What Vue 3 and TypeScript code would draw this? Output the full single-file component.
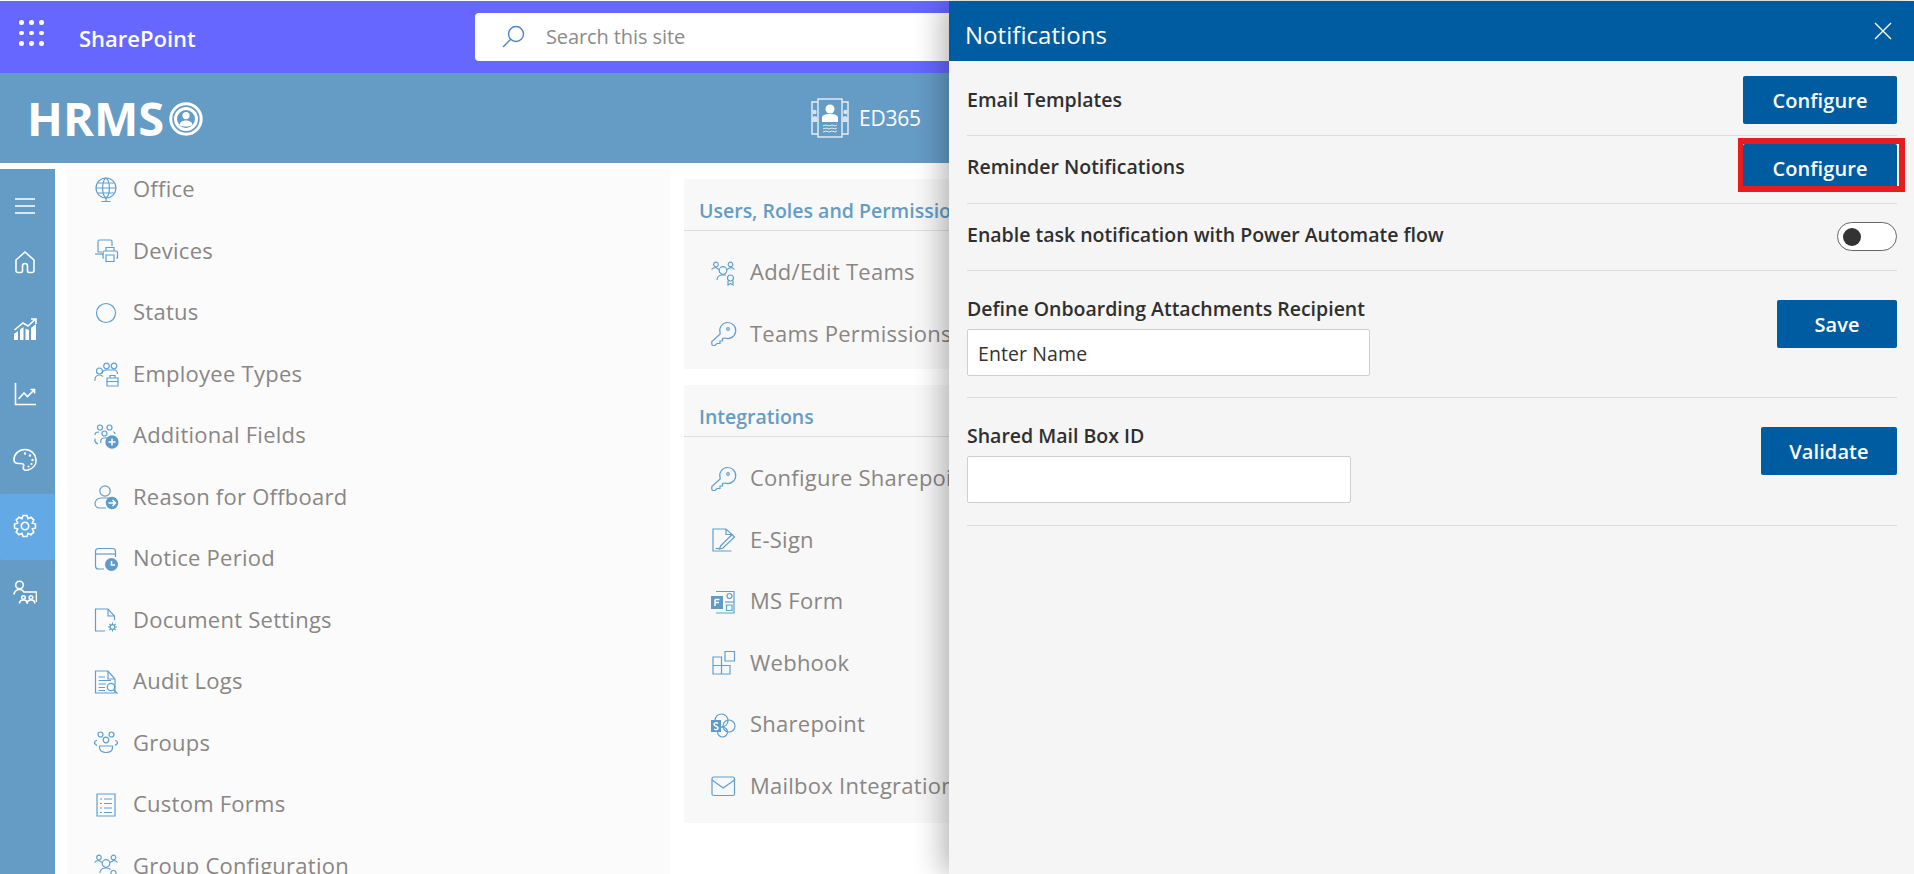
<script setup lang="ts">
interface Icon { s?: string[]; f?: string[]; w?: string[] }
interface Item { label: string; icon: Icon }

const c = (x: number, y: number, r: number): string =>
  `M${x - r} ${y}a${r} ${r} 0 1 0 ${r * 2} 0a${r} ${r} 0 1 0 ${-r * 2} 0`

const key: Icon = {
  s: ['M9 10.5A8 8 0 1 1 14 16L11.5 16.5V19H9V21.5H6L4 23.5H2A1.5 1.5 0 0 1 .8 22V19.5L9.2 12Z', c(17, 7, 1.3)],
}

const left: Item[] = [
  { label: 'Office', icon: { s: [c(12, 10, 10), 'M12 0C7.5 3 7.5 17 12 20C16.5 17 16.5 3 12 0', 'M2 10H22M3.5 5H20.5M3.5 15H20.5M12 20V23M7.5 23.5H16.5'] } },
  { label: 'Devices', icon: { s: ['M8 13H4V2.5C4 1.5 4.5 1 5.5 1H16.5C17.5 1 18 1.5 18 2.5V7', 'M1 15H10', 'M10 19H9V13.5C9 12.5 9.5 12 10.5 12H22C23 12 23.5 12.5 23.5 13.5V19H22', 'M12 12V8.5H20V12', 'M12 16H20V22.5H12Z'] } },
  { label: 'Status', icon: { s: [c(12, 12, 9.5)] } },
  { label: 'Employee Types', icon: { s: [c(5.5, 9, 3), c(12.5, 4, 2.8), c(20, 4, 2.8), 'M.8 19C.8 15 3 13 5.5 13C7 13 8 13.5 9 14.5', 'M8 11.5C8.5 9 10 8 12.5 8H20C22 8 23.5 10 23.5 12', 'M13 16H24V24H13ZM16 16V13.5H21V16M13 19.5H24'] } },
  { label: 'Additional Fields', icon: { s: [c(6, 3.5, 2.5), c(15.5, 3.5, 2.5), c(10.5, 9.5, 2.5), 'M1 11C1 8.5 2.5 8 5 8M4 20C1.5 19 .5 17 1 14.5M13 14H10C7.5 14 6 16 7 19', 'M19 8C20 8 21 9 21 10'], f: [c(18, 18, 6.7)], w: ['M18 14.5V21.5M14.5 18H21.5'] } },
  { label: 'Reason for Offboard', icon: { s: [c(11, 6, 5.2), 'M16 13H7C3 13 1 16 1 18.5C1 21 3 23 6 23H12'], f: [c(18, 18, 6.2)], w: ['M14.5 18H21M18.5 15L21.5 18L18.5 21'] } },
  { label: 'Notice Period', icon: { s: ['M10 22H4.5C2.5 22 1.5 21 1.5 19V4.5C1.5 2.5 2.5 1.5 4.5 1.5H18.5C20.5 1.5 21.5 2.5 21.5 4.5V10', 'M1.5 7H21.5'], f: [c(17.5, 17.5, 6.5)], w: ['M17.5 14V18H21'] } },
  { label: 'Document Settings', icon: { s: ['M11 23H1.5V1H14L20.5 8V12', 'M14 1V8H20.5', c(18.5, 19, 2.3), 'M18.5 14.5V16.5M18.5 21.5V23.5M14 19H16M21 19H23M15.3 15.8L16.8 17.3M20.2 20.7L21.7 22.2M15.3 22.2L16.8 20.7M20.2 17.3L21.7 15.8'] } },
  { label: 'Audit Logs', icon: { s: ['M21 9V23H1.5V1H14L21 9', 'M14 1V9H21', 'M4.5 7H11M4.5 10.5H17M4.5 14H12M4.5 17.5H11M4.5 20.5H11', c(17, 17, 3.7), 'M19.5 19.8L23.5 23.5'] } },
  { label: 'Groups', icon: { s: [c(6.5, 3.5, 2.5), c(17.5, 3.5, 2.5), c(12, 9, 2.8), 'M3 9.5C1 9.5 .5 11 .5 12.5L3 14.5M21 9.5C23 9.5 23.5 11 23.5 12.5L21 14.5', 'M5.5 15H18.5V16.5C18.5 20 15.5 21.5 12 21.5C8.5 21.5 5.5 20 5.5 16.5Z'] } },
  { label: 'Custom Forms', icon: { s: ['M3 1H21V23H3Z', 'M6 6H8M10 6H18M6 10.5H8M10 10.5H18M6 15H8M10 15H18M6 19.5H8M10 19.5H18'] } },
  { label: 'Group Configuration', icon: { s: [c(5, 3.5, 2.3), c(19.5, 3.5, 2.3), c(12, 9.5, 3.8), c(19.5, 19, 2.5), 'M.5 8.5C1.5 7 3 6.5 5 6.5L8 8.5M23.5 8.5C22.5 7 21 6.5 19.5 6.5L16 8.5M6 19C6 16 8 14 12 14C14 14 15.5 14.5 16.5 15.5'] } },
]

const users: Item[] = [
  { label: 'Add/Edit Teams', icon: { s: [c(5, 3.5, 2.3), c(19.5, 3.5, 2.3), c(12, 9.5, 3.8), c(19.5, 17, 3), 'M.5 8.5C1.5 7 3 6.5 5 6.5L8 8.5M23.5 8.5C22.5 7 21 6.5 19.5 6.5L16 8.5M6 19C6 16 8 14 12 14H15', 'M17 20V24L19.5 22.5L22 24V20'] } },
  { label: 'Teams Permissions', icon: key },
]

const integrations: Item[] = [
  { label: 'Configure Sharepoint', icon: key },
  { label: 'E-Sign', icon: { s: ['M20.5 23H2V1H15L21 6.5L19 9', 'M15 1V6.5H20', 'M9.5 18L21 6.5L23.5 9L12 20L8.5 21Z', 'M4.5 20.5H8'] } },
  { label: 'MS Form', icon: { s: ['M5 1.5H23V23H5', c(18.5, 6, 2.5), 'M15.5 15H21V20.5H15.5Z', 'M14 12H23'], f: ['M0 6H12V19H0Z'], w: ['M4 9.5H8.5M4 9.5V16M4 12.5H8'] } },
  { label: 'Webhook', icon: { s: ['M2 6H10.5V14.5H19V23H2Z', 'M2 14.5H10.5V23', 'M14 .5H23.5V10H14Z'] } },
  { label: 'Sharepoint', icon: { s: [c(10.5, 7.5, 6.5), c(18, 13, 6), c(11.5, 19, 5)], f: ['M0 7H10V19H0Z'], w: ['M7 10.5C5.5 9.5 3 9.5 3 11.5C3 13.5 7 13 7 15C7 17 4.5 17 3 16'] } },
  { label: 'Mailbox Integration', icon: { s: ['M1 5C1 3.5 2 3 3 3H21.5C23 3 23.5 3.5 23.5 5V20C23.5 21 23 21.5 21.5 21.5H3C2 21.5 1 21 1 20Z', 'M1 6L12.2 14L23.5 6'] } },
]

const rail: Icon[] = [
  { s: ['M2 5H22M2 12H22M2 19H22'] },
  { s: ['M3 10L12 2L21 10V20.5C21 22 20 22.5 19 22.5H16C15 22.5 14.5 22 14.5 21V16C14.5 14.5 13.5 13.5 12 13.5C10.5 13.5 9.5 14.5 9.5 16V21C9.5 22 9 22.5 8 22.5H5C4 22.5 3 22 3 20.5Z'] },
  { s: ['M1.5 13L10 6L15 9L22.5 2M18 2H23V7'], f: ['M1 17L5 14V23H1ZM7 12.5L10.5 10V23H7ZM12.5 11.5L16 13V23H12.5ZM18 11L23 7V23H18Z'] },
  { s: ['M2.5 1V22.5H23', 'M5.5 17L11 11L14.5 14.5L21.5 7.5M17.5 7.5H21.5V11.5'] },
  { s: ['M12 1.5C6 1.5 1 6 1 11.5C1 14 3 15.5 5.5 15.5C7.5 15.5 9.5 15 10.5 16.5C11.5 18 9.5 19 10.5 21C11.5 22.5 13 22.5 15 22C20 20.5 23.5 16.5 23 11.5C22.5 6 18 1.5 12 1.5Z'], f: [c(12, 5.5, 1.2), c(17, 7.5, 1.2), c(19.5, 12, 1.2), c(18.5, 16, 1.1), c(15.5, 18.5, 1.1)] },
  { s: [c(12, 12, 3.7), 'M10 1.5H14L15 4.7L18 3.3L20.8 6L19.3 9L22.5 10V14L19.3 15L20.8 18L18 20.7L15 19.3L14 22.5H10L9 19.3L6 20.7L3.2 18L4.7 15L1.5 14V10L4.7 9L3.2 6L6 3.3L9 4.7Z'] },
  { s: [c(6.5, 5, 3.8), 'M.8 14.5C1.5 11 4 9.5 7 9.5C8.5 9.5 10 10.5 11 12H23.5V22', c(10.5, 17.5, 1.8), c(18, 17.5, 1.8), 'M6.5 23.5C6.5 21 8.5 20 10.5 20C12.5 20 14.2 21 14.2 23.5', 'M14.2 23.5C14.2 21 16 20 18 20C20 20 21.8 21 21.8 23.5'] },
]
</script>

<template>
  <div class="page">
    <header class="suite">
      <div class="waffle"><i v-for="n in 9" :key="n"></i></div>
      <span class="brand">SharePoint</span>
      <div class="search">
        <svg class="search-icon" viewBox="0 0 24 24"><path d="M2 22L10 14" /><circle cx="15" cy="9" r="7.5" /></svg>
        <span>Search this site</span>
      </div>
    </header>

    <div class="banner">
      <div class="logo">
        <span>HRMS</span>
        <svg viewBox="0 0 34 34" class="logo-mark">
          <circle cx="17" cy="17" r="15.2" class="ring" />
          <circle cx="17" cy="17" r="10.5" class="ring" />
          <circle cx="17" cy="13.6" r="3.6" class="dot" />
          <path class="dot" d="M10.5 23C11 19.5 14 18.5 17 18.5C20 18.5 23 19.5 23.5 23C20 25 14 25 10.5 23Z" />
        </svg>
      </div>
      <div class="ed">
        <svg viewBox="0 0 38 40" class="ed-mark">
          <path class="ed-line" d="M7 4H1V36H7M31 4H37V36H31" />
          <rect class="ed-line" x="7" y="1" width="24" height="38" />
          <circle cx="19" cy="11" r="4.5" class="ed-fill" />
          <path class="ed-fill" d="M11 24V20C11 17 14 16 19 16C24 16 27 17 27 20V24Z" />
          <path class="ed-thin" d="M12 28L15 27L18 28L21 27L24 28L26 27M12 31L15 30L18 31L21 30L24 31L26 30M12 34L15 33L18 34L21 33L24 34L26 33" />
          <circle cx="3.5" cy="14" r="2.2" class="ed-dim" /><circle cx="34.5" cy="14" r="2.2" class="ed-dim" />
          <path class="ed-dim" d="M1 24V20C2 18 5 18 6.5 19V24ZM31.5 24V19C33 18 36 18 37 20V24Z" />
        </svg>
        <span>ED365</span>
      </div>
    </div>

    <div class="body">
      <nav class="rail">
        <div v-for="(ic, i) in rail" :key="i" class="rail-item" :class="{ first: i === 0, active: i === 5 }">
          <svg viewBox="0 0 24 24" class="rail-icon">
            <path v-for="d in ic.s" :key="d" :d="d" class="rail-s" />
            <path v-for="d in ic.f" :key="d" :d="d" class="rail-f" />
          </svg>
        </div>
      </nav>

      <section class="panel">
        <ul class="list list-left">
          <li v-for="it in left" :key="it.label" class="row">
            <svg viewBox="0 0 24 24" class="ico">
              <path v-for="d in it.icon.s" :key="d" :d="d" class="s" />
              <path v-for="d in it.icon.f" :key="d" :d="d" class="f" />
              <path v-for="d in it.icon.w" :key="d" :d="d" class="w" />
            </svg>
            <span>{{ it.label }}</span>
          </li>
        </ul>
      </section>

      <section class="cards">
        <div class="card card-users">
          <h3>Users, Roles and Permissions</h3>
          <ul class="list">
            <li v-for="it in users" :key="it.label" class="row">
              <svg viewBox="0 0 24 24" class="ico">
                <path v-for="d in it.icon.s" :key="d" :d="d" class="s" />
              </svg>
              <span>{{ it.label }}</span>
            </li>
          </ul>
        </div>
        <div class="card card-int">
          <h3>Integrations</h3>
          <ul class="list">
            <li v-for="it in integrations" :key="it.label" class="row">
              <svg viewBox="0 0 24 24" class="ico">
                <path v-for="d in it.icon.s" :key="d" :d="d" class="s" />
                <path v-for="d in it.icon.f" :key="d" :d="d" class="f" />
                <path v-for="d in it.icon.w" :key="d" :d="d" class="w" />
              </svg>
              <span>{{ it.label }}</span>
            </li>
          </ul>
        </div>
      </section>
    </div>

    <aside class="drawer">
      <div class="drawer-head">
        <span class="title">Notifications</span>
        <svg viewBox="0 0 18 18" class="close"><path d="M1 1L17 17M17 1L1 17" /></svg>
      </div>
      <div class="drawer-body">
        <div class="line l1">
          <b>Email Templates</b>
          <button class="btn wide">Configure</button>
        </div>
        <div class="line l2">
          <b class="up1">Reminder Notifications</b>
          <div class="marked">
            <button class="btn wide short">Configure</button>
            <span class="marker"></span>
          </div>
        </div>
        <div class="line l3">
          <b class="up">Enable task notification with Power Automate flow</b>
          <span class="toggle"><i></i></span>
        </div>
        <div class="line l4">
          <div class="field">
            <b>Define Onboarding Attachments Recipient</b>
            <div class="input i1">Enter Name</div>
          </div>
          <button class="btn save">Save</button>
        </div>
        <div class="line l5">
          <div class="field">
            <b>Shared Mail Box ID</b>
            <div class="input i2"></div>
          </div>
          <button class="btn validate">Validate</button>
        </div>
      </div>
    </aside>
  </div>
</template>

<style scoped>
.page {
  position: relative;
  width: 1914px;
  height: 874px;
  overflow: hidden;
  background: #fff;
  padding-top: 1px;
  box-sizing: border-box;
  font-family: "Open Sans", "Noto Sans", sans-serif;
}
.suite {
  height: 72px;
  background: #6667ff;
  display: flex;
  align-items: center;
  box-sizing: border-box;
}
.waffle {
  width: 24px;
  display: grid;
  grid-template-columns: repeat(3, 4px);
  gap: 6px;
  margin-left: 19px;
  margin-top: -8px;
}
.waffle i {
  width: 4.5px;
  height: 4.5px;
  border-radius: 50%;
  background: #fff;
}
.brand {
  width: 118px;
  color: #fff;
  font-size: 22px;
  font-weight: 600;
  margin-left: 36px;
  margin-top: 1px;
  white-space: nowrap;
}
.search {
  width: 560px;
  height: 48px;
  margin: -1px 0 0 278px;
  background: #fff;
  border-radius: 4px;
  display: flex;
  align-items: center;
  color: #8b8b8b;
  font-size: 20px;
  letter-spacing: -0.1px;
  padding-left: 26px;
  box-sizing: border-box;
}
.search-icon {
  width: 24px;
  height: 24px;
  fill: none;
  stroke: #4d86c6;
  stroke-width: 1.4;
  margin-right: 21px;
}
.banner {
  height: 90px;
  background: #659cc6;
  display: flex;
  align-items: center;
  color: #fff;
}
.logo {
  display: flex;
  align-items: center;
  margin-left: 27px;
  width: 784px;
  font-size: 47px;
  font-weight: 700;
  line-height: 1;
}
.logo-mark {
  width: 34px;
  height: 34px;
  margin-left: 5px;
  margin-top: 2px;
}
.ring {
  fill: none;
  stroke: #fff;
  stroke-width: 3;
}
.dot {
  fill: #fff;
}
.ed {
  display: flex;
  align-items: center;
  gap: 10px;
  font-size: 21px;
  letter-spacing: -0.2px;
}
.ed-mark {
  width: 38px;
  height: 40px;
}
.ed-line {
  fill: none;
  stroke: #e6f0f7;
  stroke-width: 1.4;
}
.ed-fill {
  fill: #fff;
}
.ed-dim {
  fill: #d4e5f1;
}
.ed-thin {
  fill: none;
  stroke: #fff;
  stroke-width: 0.8;
}
.body {
  display: flex;
  margin-top: 6px;
  height: 705px;
}
.rail {
  width: 55px;
  flex: none;
  background: #659cc6;
}
.rail-item {
  height: 66px;
  display: flex;
  align-items: center;
  justify-content: center;
  padding-right: 5px;
  padding-bottom: 3px;
  box-sizing: border-box;
}
.rail-item.first {
  height: 61px;
  padding-top: 12px;
  padding-bottom: 0;
}
.rail-item:nth-child(3) {
  padding-bottom: 0;
}
.rail-item.active {
  background: #62a9e6;
  border-radius: 2px;
}
.rail-icon {
  width: 24px;
  height: 24px;
}
.rail-s {
  fill: none;
  stroke: #fff;
  stroke-width: 1.6;
}
.rail-f {
  fill: #fff;
}
.panel {
  width: 603px;
  margin-left: 12px;
  flex: none;
  background: #fbfbfb;
  overflow: hidden;
}
.list {
  list-style: none;
  margin: 0;
  padding: 0;
}
.list-left {
  margin-top: -10px;
  padding-left: 27px;
}
.row {
  height: 61.5px;
  display: flex;
  align-items: center;
  gap: 15px;
  color: #8a8684;
  font-size: 22px;
  letter-spacing: 0.25px;
  white-space: nowrap;
}
.row span {
  margin-top: -3px;
}
.ico {
  width: 24px;
  height: 24px;
  flex: none;
  overflow: visible;
}
.s {
  fill: none;
  stroke: #5f9fcf;
  stroke-width: 1.2;
}
.f {
  fill: #5f9bc8;
}
.w {
  fill: none;
  stroke: #fff;
  stroke-width: 1.5;
}
.cards {
  margin: 10px 0 0 14px;
  width: 320px;
  display: flex;
  flex-direction: column;
  gap: 16px;
  overflow: hidden;
}
.card {
  width: 320px;
  background: #f8f8f8;
  overflow: hidden;
}
.card-users {
  height: 190px;
}
.card-int {
  height: 438px;
}
.card h3 {
  margin: 0;
  height: 52px;
  padding: 20px 0 0 15px;
  line-height: 24px;
  box-sizing: border-box;
  border-bottom: 1px solid #dedede;
  color: #659cc6;
  font-size: 19.5px;
  font-weight: 600;
  white-space: nowrap;
}
.card .list {
  padding: 11px 0 0 27px;
}
.drawer {
  position: absolute;
  top: 1px;
  right: 0;
  width: 965px;
  bottom: 0;
  background: #f5f5f5;
  box-shadow: -6px 0 28px rgba(0, 0, 0, 0.3);
  display: flex;
  flex-direction: column;
}
.drawer-head {
  height: 60px;
  background: #005ca1;
  color: #fff;
  font-size: 24px;
  letter-spacing: 0.05px;
  display: flex;
  align-items: center;
  justify-content: space-between;
  padding: 0 22px 0 16px;
  box-sizing: border-box;
  flex: none;
}
.title {
  margin-top: 6px;
}
.close {
  width: 18px;
  height: 18px;
  fill: none;
  stroke: #fff;
  stroke-width: 1.4;
}
.drawer-body {
  margin: 0 17px 0 18px;
}
.line {
  display: flex;
  justify-content: space-between;
  border-bottom: 1px solid #dcdcdc;
  align-items: center;
  box-sizing: border-box;
}
.line b {
  font-size: 19.5px;
  font-weight: 600;
  color: #2f2f2f;
  line-height: 24px;
  white-space: nowrap;
}
.line b.up {
  margin-top: -3px;
}
.line b.up1 {
  margin-top: -2px;
}
.l1 {
  height: 75px;
  padding: 15px 0 11px;
}
.l2 {
  height: 68px;
  padding: 8px 0 12px;
}
.l3 {
  height: 67px;
  padding: 18px 0 19px;
}
.l4,
.l5 {
  align-items: flex-start;
}
.l4 {
  height: 127px;
}
.l5 {
  height: 128px;
}
.field {
  display: flex;
  flex-direction: column;
  padding-top: 26px;
  gap: 8px;
}
.btn {
  border: 0;
  border-radius: 2px;
  background: #005ca1;
  color: #fff;
  font-family: inherit;
  font-size: 20px;
  font-weight: 600;
  letter-spacing: 0.1px;
  height: 48px;
  padding: 1px 0 0;
}
.wide {
  width: 154px;
}
.short {
  height: 47px;
  display: block;
}
.save {
  width: 120px;
  margin-top: 29px;
}
.validate {
  width: 136px;
  margin-top: 29px;
}
.marked {
  position: relative;
}
.marker {
  position: absolute;
  left: -5px;
  top: -6px;
  width: 167px;
  height: 54px;
  box-sizing: border-box;
  border: 6px solid #e81c1f;
  border-left-width: 5px;
}
.toggle {
  display: block;
  width: 60px;
  height: 29px;
  box-sizing: border-box;
  border: 1px solid #666;
  border-radius: 15px;
  background: #fff;
  position: relative;
}
.toggle i {
  position: absolute;
  left: 5px;
  top: 5px;
  width: 18px;
  height: 18px;
  border-radius: 50%;
  background: #333;
}
.input {
  box-sizing: border-box;
  background: #fff;
  border: 1px solid #cfcfcf;
  border-radius: 2px;
  height: 47px;
  font-size: 19.5px;
  letter-spacing: 0.1px;
  color: #333;
  display: flex;
  align-items: center;
  padding: 2px 0 0 10px;
}
.i1 {
  width: 403px;
}
.i2 {
  width: 384px;
}
</style>
